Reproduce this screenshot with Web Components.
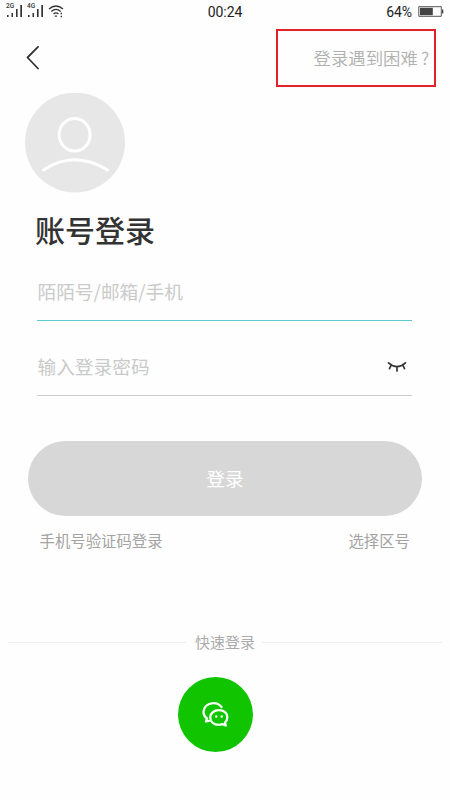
<!DOCTYPE html>
<html lang="zh-CN">
<head>
<meta charset="utf-8">
<title>账号登录</title>
<style>
html,body{margin:0;background:#fefefe}
body{width:450px;height:800px;overflow:hidden;font-family:"Noto Sans CJK SC",sans-serif;font-weight:400}
</style>
</head>
<body>
<login-page></login-page>
<script>
const define = (name, html) => {
  const t = document.createElement('template');
  t.innerHTML = html;
  customElements.define(name, class extends HTMLElement {
    constructor() {
      super();
      this.attachShadow({mode: 'open'}).appendChild(t.content.cloneNode(true));
    }
  });
};

define('signal-bars', `
<style>
:host{display:flex;align-items:flex-end;position:relative;width:17px;height:14px;margin-right:4px}
span{position:absolute;left:0;top:-1px;font:500 6.500px/7px Roboto,sans-serif;color:#333}
svg{display:block}
</style>
<span><slot></slot></span>
<svg width="17" height="14" fill="#333"><path d="M1 11h1.600v2H1zM5.500 9h1.500v4H5.500zM10 5h1.600v8H10zM14.300 1h1.700v12H14.300z"/></svg>`);

define('status-bar', `
<style>
:host{display:grid;grid-template-columns:1fr auto 1fr;align-items:center;height:24px;padding:0 6px;color:#222;font:400 14px/24px Roboto,sans-serif}
.l,.r{display:flex;align-items:center}
.l{height:20px;margin-top:-2px}
.r{justify-content:flex-end;gap:6px}
svg{display:block}
.t{letter-spacing:-.1px}
.r span{letter-spacing:-.1px;margin-top:-1px}
</style>
<div class="l"><signal-bars>2G</signal-bars><signal-bars>4G</signal-bars>
<svg width="17" height="14" viewBox="0 0 17 14" fill="none" stroke="#333" stroke-width="1.300"><path d="M1 5Q8 -1 15 5M3.300 7.500Q8 3.200 12.700 7.500M5.500 10Q8 7.700 10.500 10"/><path d="M6.800 12.200h2.200M12.600 9.500h1.400M12.600 12.500h1.400"/></svg></div>
<span class="t">00:24</span>
<div class="r"><span>64%</span><svg width="26" height="12" viewBox="0 0 26 12"><path d="M.8 .7h22.500v9.600H.8z" fill="#fff" stroke="#555" stroke-width="1"/><path d="M2 1.800h12.800v7.400H2z" fill="#444"/><path d="M24 3.500h1.300v4H24z" fill="#444"/></svg></div>`);

define('nav-bar', `
<style>
:host{display:flex;justify-content:space-between;align-items:flex-start;padding:5px 14px 0 26px;height:64px;box-sizing:border-box}
svg{display:block;margin-top:17px}
.help{box-sizing:border-box;width:160px;height:57.500px;border:2px solid #e3202b;display:flex;align-items:center;justify-content:flex-end;padding-right:5px;font-size:17.400px;color:#b0b0b0;line-height:24px;white-space:nowrap;font-weight:350}
::slotted(span){margin-left:3px}
</style>
<svg width="14" height="24" viewBox="0 0 14 24" fill="none" stroke="#333" stroke-width="1.800" stroke-linecap="round" stroke-linejoin="round"><path d="M12 .9L1.500 11.500L12 22.500"/></svg>
<div class="help"><div><slot></slot></div></div>`);

define('user-avatar', `
<style>:host{display:block;width:100px;height:100px;margin:5px 0 0 25px}svg{display:block}</style>
<svg width="100" height="100" viewBox="0 0 100 100" fill="none" stroke="#fff" stroke-width="3" stroke-linecap="round"><circle cx="50" cy="49.500" r="50" fill="#e7e7e7" stroke="none"/><ellipse cx="49.600" cy="41.700" rx="15.500" ry="16.300"/><path d="M18.500 77Q49 56.500 82.500 77"/></svg>`);

define('input-row', `
<style>
:host{display:flex;box-sizing:border-box;height:58px;margin:0 38px 0 37px;border-bottom:1px solid var(--line,#ccc);align-items:center;justify-content:space-between;font-size:18.700px;line-height:28px;color:#cacaca}
span{margin:-2px 0 0 .5px}
</style>
<span><slot></slot></span><slot name="icon"></slot>`);

define('closed-eye', `
<style>:host{display:block;margin-right:5px}svg{display:block}</style>
<svg width="20" height="12" viewBox="0 0 20 12" fill="none" stroke="#333" stroke-width="1.700" stroke-linecap="round"><path d="M1.500 1.800Q10 9.500 18.500 1.800M4 4.500L2.500 7.600M10 6v4M16 4.500L17.500 7.600"/></svg>`);

define('login-button', `
<style>:host{display:flex;align-items:center;justify-content:center;height:75px;box-sizing:border-box;padding-bottom:1px;margin:45px 28px 0;border-radius:38px;background:#d7d7d7;color:#fff;font-size:18.700px;line-height:28px}</style>
<slot></slot>`);

define('link-row', `
<style>:host{display:flex;justify-content:space-between;margin:13px 40px 0 39.500px;font-size:15.400px;line-height:22px;color:#a3a3a3}</style>
<slot></slot>`);

define('section-divider', `
<style>
:host{display:flex;align-items:center;margin:79px 8px 0;height:24px;font-size:15px;line-height:24px;color:#aaa}
i{height:1px;background:#eee;width:178px}
i:last-child{width:180px}
span{flex:1;text-align:center;padding-left:2px}
</style>
<i></i><span><slot></slot></span><i></i>`);

define('wechat-button', `
<style>:host{display:block;width:75px;height:75px;margin:23px 0 0 178px;border-radius:50%;background:#10c500}svg{display:block}</style>
<svg width="75" height="75" viewBox="0 0 75 75" fill="none" stroke="#f4fff3" stroke-width="2.300" stroke-linecap="round" stroke-linejoin="round"><path d="M43.500 30C41.500 27.500 38.500 26 35 26.200C29 26.500 25.500 30.500 25.500 35C25.500 38 26.800 40 29 41.500L28 44.500L31 43.800"/><path d="M47 45.500C48.500 44 49.300 42.300 49.300 40.200C49.300 36.200 46 33.200 41 33.200C36 33.200 32.200 36.200 32.200 40.500C32.200 45 36 47.800 41 47.800C42.500 47.800 43.500 47.500 44.500 47.100L47.800 48.500Z"/><path d="M38.200 39.500h.1M43.700 39.500h.1" stroke-width="2.400"/></svg>`);

define('login-page', `
<style>
:host{display:flex;flex-direction:column;width:450px;height:800px;background:#fefefe}
h1{margin:14px 0 0 35px;font-size:30px;line-height:44px;font-weight:500;color:#333}
.a{--line:#5cc9d0;margin-top:12px}
.b{margin-top:17px;--line:#ccc}
</style>
<status-bar></status-bar>
<nav-bar>登录遇到困难<span>?</span></nav-bar>
<user-avatar></user-avatar>
<h1>账号登录</h1>
<input-row class="a">陌陌号/邮箱/手机</input-row>
<input-row class="b">输入登录密码<closed-eye slot="icon"></closed-eye></input-row>
<login-button>登录</login-button>
<link-row><span>手机号验证码登录</span><span>选择区号</span></link-row>
<section-divider>快速登录</section-divider>
<wechat-button></wechat-button>`);
</script>
</body>
</html>
